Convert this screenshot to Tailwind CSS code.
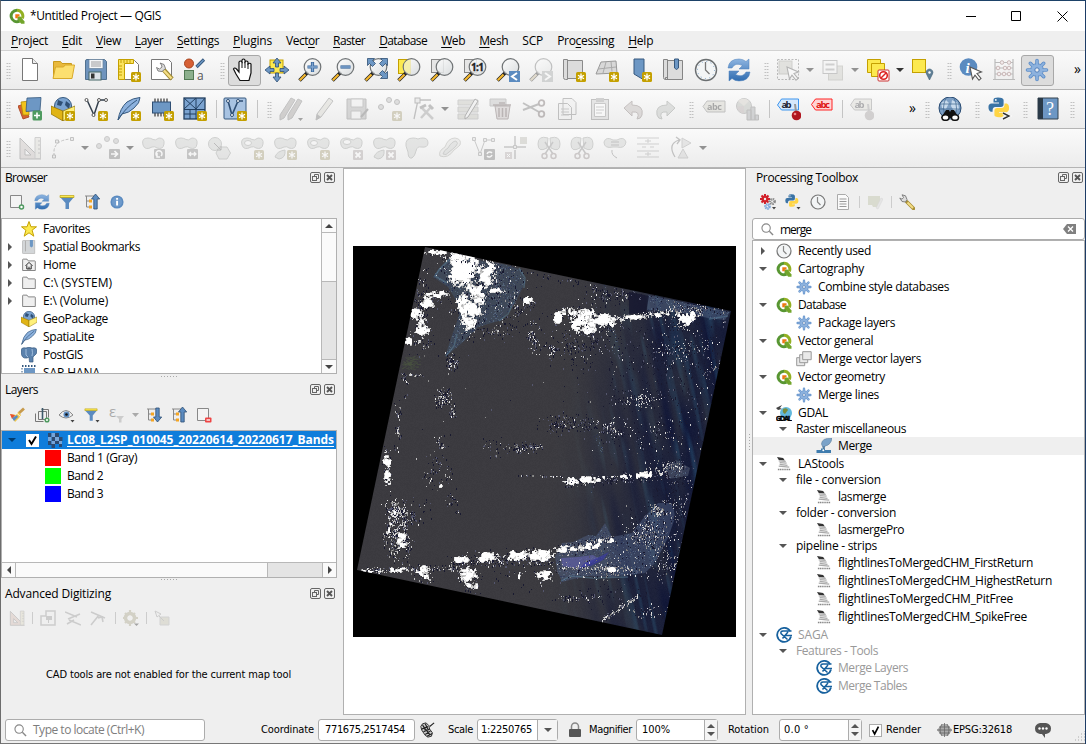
<!DOCTYPE html>
<html lang="en">
<head>
<meta charset="utf-8">
<title>*Untitled Project — QGIS</title>
<script src="https://cdn.jsdelivr.net/npm/@tailwindcss/browser@4"></script>
</head>
<body class="w-[1086px] h-[744px] overflow-hidden bg-[#efefef] font-['Open_Sans','Noto_Sans',sans-serif] text-[12px] leading-[18px] text-black">
<svg class="absolute size-0">
<defs>
<linearGradient id="glass" x1="0" y1="0" x2="1" y2="1"><stop offset="0" stop-color="#fff"/><stop offset="1" stop-color="#d5d9db"/></linearGradient>
<linearGradient id="ref" x1="0" y1="0" x2="0" y2="1"><stop offset="0" stop-color="#8db4e0"/><stop offset="1" stop-color="#2f6cb0"/></linearGradient>
<symbol id="nb" viewBox="0 0 24 24"><rect x="14" y="14" width="10" height="10" rx="1.500" fill="#c4a000"/><path d="M19 15.500v7M16 17.200l6 3.600M22 17.200l-6 3.600" stroke="#fff" stroke-width="1.300"/></symbol>
<symbol id="mag" viewBox="0 0 24 24"><path d="M10 14L1.500 22.500" stroke="#222" stroke-width="3.600"/><path d="M7.500 16.500L1.800 22.200" stroke="#f5b82e" stroke-width="2.200"/><circle cx="14.500" cy="9" r="8.300" fill="url(#glass)" fill-opacity=".85" stroke="#6f7375" stroke-width="1.200"/></symbol>
<symbol id="qlogo" viewBox="0 0 16 16"><path d="M8 2.200a5.800 5.800 0 1 0 2.500 11" fill="none" stroke="#589632" stroke-width="3"/><path d="M8 2.200a5.800 5.800 0 0 1 5.300 8.200" fill="none" stroke="#93b023" stroke-width="3"/><path d="M8.500 8.500l3 0 4 5v2.300h-3.300l-3.700-4.300z" fill="#72a52b"/><path d="M6.300 6.200h4.200v2l-1.700.2v1.800H6.300z" fill="#ee7913"/></symbol>
<symbol id="new" viewBox="0 0 24 24"><path d="M4.500.5h10l5 5v17h-15z" fill="#fff" stroke="#777"/><path d="M14.500.5v5h5" fill="#eee" stroke="#777"/></symbol>
<symbol id="open" viewBox="0 0 24 24"><path d="M2.500 20.500V3.500h7l1.500 2h9.500v3" fill="#e9b93c" stroke="#c99a1d"/><path d="M2 20.500L4.500 9h8l1.500-2h9.500L21 20.500z" fill="#fcdf6f" stroke="#d8a92a"/></symbol>
<symbol id="save" viewBox="0 0 24 24"><path d="M1.500 3q0-1.500 1.500-1.500h17.500L22.500 3.500v18h-21z" fill="#6f94bd" stroke="#52718f"/><rect x="5" y="1.500" width="14" height="9" fill="#f4f6f8" stroke="#66809b" stroke-width=".7"/><path d="M7 4h10M7 6h10M7 8h10" stroke="#888" stroke-width=".8"/><rect x="5" y="14" width="12" height="8" fill="#dde3ea" stroke="#466"/><rect x="7" y="15.500" width="3.500" height="5" fill="#333"/></symbol>
<symbol id="layout" viewBox="0 0 24 24"><path d="M5.500 2.500h12l4 4v15h-16z" fill="#fff" stroke="#777"/><path d="M1.500 1.500h15v4h-9v16h-6z" fill="#fbe35e" stroke="#c4a000"/><path d="M4 2v3M7 2v3M10 2v3M13 2v3M2 8h3M2 11h3M2 14h3M2 17h3" stroke="#c4a000"/><use href="#nb"/></symbol>
<symbol id="wrench" viewBox="0 0 24 24"><path d="M1.500 1.500h17l3 3v17h-20z" fill="#fff" stroke="#777"/><path d="M13 11l9 10" stroke="#a18b32" stroke-width="4.500"/><path d="M13.500 12l8 8.500" stroke="#f4dd85" stroke-width="2.500"/><path d="M10 5l4 1.500 1.500 4-3.500 3-4-.5L6.500 9.500l3 1.500 2.500-2-.5-2z" fill="#ddd" stroke="#777" stroke-width=".9"/></symbol>
<symbol id="style" viewBox="0 0 24 24"><circle cx="6" cy="5.500" r="4.500" fill="#d66035" stroke="#a8431e"/><rect x="1.500" y="12.500" width="9" height="9" fill="#8cb08d" stroke="#527a54"/><path d="M13.500 9l7.500-7.500" stroke="#36597e" stroke-width="3.200"/><path d="M14 8.500l6.500-6.500" stroke="#6d97c4" stroke-width="1.500"/><text x="14" y="22" font-size="12" fill="#555">a</text></symbol>
<symbol id="hand" viewBox="0 0 24 24"><path d="M8 22.500L4 16 1.500 11q1-2 3 0L7 14V4q1.500-2 3 0V2q1.500-2 3 0v2q1.500-2 3 0v2q2-1.500 3 0v9l-2 7.500z" fill="#fff" stroke="#111" stroke-width="1.200"/><path d="M10 4v6M13 4v6M16 5.500V11" stroke="#111"/></symbol>
<symbol id="pan" viewBox="0 0 24 24"><rect x="5" y="2" width="13" height="13" fill="#fce94f" stroke="#c4a000"/><path d="M12 0l4 5h-2.500v4h-3V5H8zM12 24l4-5h-2.500v-4h-3v4H8zM0 12l5-4v2.500h4v3H5V16zM24 12l-5-4v2.500h-4v3h4V16z" fill="#6d97c4" stroke="#2f4f74" stroke-width=".8"/></symbol>
<symbol id="zin" viewBox="0 0 24 24"><use href="#mag"/><path d="M14.500 4v10M9.500 9h10" stroke="#36659b" stroke-width="3.200"/><path d="M14.500 4.500v9M10 9h9" stroke="#7fa5cf" stroke-width="1.500"/></symbol>
<symbol id="zout" viewBox="0 0 24 24"><use href="#mag"/><path d="M9.500 9h10" stroke="#36659b" stroke-width="3.200"/><path d="M10 9h9" stroke="#7fa5cf" stroke-width="1.500"/></symbol>
<symbol id="zfull" viewBox="0 0 24 24"><use href="#mag"/><path d="M3.500.5h7l-2 2 3 3-3 3-3-3-2 2zM23.500.5h-7l2 2-3 3 3 3 3-3 2 2zM23.500 20.500h-7l2-2-3-3 3-3 3 3 2-2z" fill="#6d97c4" stroke="#2f4f74" stroke-width=".8"/></symbol>
<symbol id="zsel" viewBox="0 0 24 24"><rect x="1.500" y="1.500" width="12" height="14" fill="#fce94f" stroke="#c4a000"/><use href="#mag"/><path d="M7.500 5q2-3 6-3.500v14q-6-.5-6.500-6z" fill="#f6ee9a" opacity=".75"/></symbol>
<symbol id="zlay" viewBox="0 0 24 24"><rect x="1.500" y="1.500" width="12" height="13" fill="#e6e6e6" stroke="#888"/><use href="#mag"/></symbol>
<symbol id="z11" viewBox="0 0 24 24"><rect x="1.500" y="1.500" width="12" height="13" fill="#e6e6e6" stroke="#888"/><use href="#mag"/><text x="8" y="12.700" font-size="10" font-weight="bold" fill="#222" stroke="#222" stroke-width=".3" textLength="13">1:1</text></symbol>
<symbol id="zlast" viewBox="0 0 24 24"><use href="#mag"/><rect x="13" y="13" width="11" height="11" fill="#5b8bc0"/><path d="M21 15l-5 3.500 5 3.500" fill="none" stroke="#fff" stroke-width="2"/></symbol>
<symbol id="znext" viewBox="0 0 24 24"><use href="#mag"/><rect x="13" y="13" width="11" height="11" fill="#9aa"/><path d="M16 15l5 3.500-5 3.500" fill="none" stroke="#fff" stroke-width="2"/></symbol>
<symbol id="nmap" viewBox="0 0 24 24"><path d="M1.500 1.500h4v20h-2q-2 0-2-2zM5.500 2.500h15v18h-15z" fill="#dcdcdc" stroke="#8a8a8a"/><use href="#nb"/></symbol>
<symbol id="n3d" viewBox="0 0 24 24"><path d="M6 4l15-1 1 12-21 1z" fill="#d8d8d8" stroke="#999"/><path d="M3 11l18-2M11 4L8 15M16 3.500l1 10" stroke="#aaa"/><use href="#nb"/></symbol>
<symbol id="nbm" viewBox="0 0 24 24"><path d="M6 1h10v21l-5-3-5-3z" fill="#6d97c4" stroke="#36597e"/><use href="#nb"/></symbol>
<symbol id="bms" viewBox="0 0 24 24"><path d="M2.500 1.500h4v20h-2q-2 0-2-2zM6.500 2.500h15v19h-17v-2h2z" fill="#dcdcdc" stroke="#858585"/><path d="M13.500 1h4v9l-2 1.500-2-1.500z" fill="#6d97c4" stroke="#36597e"/></symbol>
<symbol id="clock" viewBox="0 0 24 24"><circle cx="12" cy="12" r="10.500" fill="#f3f5f6" stroke="#6b6f71" stroke-width="1.400"/><circle cx="12" cy="12" r="8.500" fill="none" stroke="#7aa0c8" stroke-dasharray="1 3.450"/><path d="M11.500 4v8l4 4" fill="none" stroke="#777" stroke-width="1.300"/></symbol>
<symbol id="refresh" viewBox="0 0 24 24"><path d="M1 10Q2 1 12 1q4 0 7 2.500L22 1v10H12l3.500-3.500Q8 4 5 10zM23 14q-1 9-11 9-4 0-7-2.500L2 23V13h10l-3.500 3.500Q16 20 19 14z" fill="url(#ref)" stroke="#4a7fba" stroke-width=".5"/></symbol>
<symbol id="cursor" viewBox="0 0 24 24"><path d="M11 9l11.500 5-4.500 1.500 4 5-2 1.800-4-5.200-2.500 4z" fill="#fff" stroke="#555" stroke-width="1.100"/></symbol>
<symbol id="sel" viewBox="0 0 24 24"><rect x="1.500" y="1.500" width="21" height="20" fill="none" stroke="#666" stroke-dasharray="2 1.500"/><rect x="3" y="3" width="13" height="13" fill="#c7c7a8" stroke="#98987c"/><use href="#cursor"/></symbol>
<symbol id="selv" viewBox="0 0 24 24"><rect x="7.500" y="8" width="14" height="14" fill="#cdcdaf" stroke="#a5a58c"/><rect x="2" y="2.500" width="14" height="13" fill="#f4f4f4" stroke="#888"/><path d="M4.500 6.500h9M4.500 11.500h9" stroke="#999" stroke-width="2"/></symbol>
<symbol id="desel" viewBox="0 0 24 24"><path d="M1.500 1.500h13v13h-13z" fill="#fce94f" stroke="#c4a000"/><path d="M5.500 5.500h13v13h-13z" fill="#fce94f" stroke="#c4a000"/><rect x="12" y="12" width="11" height="11" rx="1" fill="#fff" stroke="#c33"/><circle cx="17.500" cy="17.500" r="3.800" fill="none" stroke="#d22" stroke-width="1.600"/><path d="M15 20l5-5" stroke="#d22" stroke-width="1.500"/></symbol>
<symbol id="selloc" viewBox="0 0 24 24"><rect x="1.500" y="1.500" width="13" height="13" fill="#fce94f" stroke="#c4a000"/><path d="M18.500 22l-3-6a3.400 3.400 0 1 1 6 0z" fill="#5f7f96" stroke="#3f5f76" stroke-width=".6"/><circle cx="18.500" cy="14.500" r="1.200" fill="#fff"/></symbol>
<symbol id="ident" viewBox="0 0 24 24"><circle cx="9.500" cy="9" r="8.800" fill="#5b8bc0"/><text x="6.500" y="14.500" font-size="15" font-style="italic" font-weight="bold" font-family="Liberation Serif" fill="#fff">i</text><use href="#cursor"/></symbol>
<symbol id="abacus" viewBox="0 0 24 24"><path d="M3 1v20M21 1v20M3 4.500h18M3 10h18M3 16h18M1 21.500h22" stroke="#bbb" stroke-width="1.200"/><g fill="#f4eded" stroke="#c9b8b8"><circle cx="10" cy="4.500" r="1.800"/><circle cx="17" cy="4.500" r="1.800"/><circle cx="6" cy="10" r="1.800"/><circle cx="13" cy="10" r="1.800"/><circle cx="17" cy="10" r="1.800"/><circle cx="7" cy="16" r="1.800"/><circle cx="12" cy="16" r="1.800"/><circle cx="17" cy="16" r="1.800"/></g></symbol>
<symbol id="gear" viewBox="0 0 24 24"><g stroke="#5f8fc9" stroke-width="3.600" stroke-linecap="round"><path d="M12 2.500v19M2.500 12h19M5.300 5.300l13.400 13.400M18.700 5.300L5.300 18.700"/></g><circle cx="12" cy="12" r="6.300" fill="#8db2de" stroke="#5f8fc9"/><g stroke="#8db2de" stroke-width="1.800" stroke-linecap="round"><path d="M12 2.500v19M2.500 12h19M5.300 5.300l13.400 13.400M18.700 5.300L5.300 18.700"/></g><circle cx="12" cy="12" r="2.200" fill="#eee" stroke="#4d7dbb"/></symbol>
<symbol id="dsm" viewBox="0 0 24 24"><path d="M0 9l6-2 5 13-6 2z" fill="#d66035" stroke="#a33f1b" stroke-width=".8"/><path d="M3 5l8-1v14H5z" fill="#f2c31b" stroke="#b08c0a" stroke-width=".8"/><path d="M9 1l14-.5-1 13-14 1z" fill="#6d97c4" stroke="#36597e" stroke-width=".8"/><rect x="14.500" y="13.500" width="9.500" height="10" rx="1.500" fill="#4e9a5f"/><path d="M19 15.500v6M16 18.500h6" stroke="#fff" stroke-width="1.600"/></symbol>
<symbol id="gpkg" viewBox="0 0 24 24"><circle cx="12" cy="9" r="8.500" fill="#7ba3d0" stroke="#36597e"/><path d="M7 3l5 2-2 4-4-1zM15 4l4 3-1 5-4-4z" fill="#2f4f74"/><path d="M0 9l12 5v10L0 17z" fill="#e0b416" stroke="#8a6c00" stroke-width=".7"/><path d="M24 9l-12 5v10l12-7z" fill="#fff07a" stroke="#8a6c00" stroke-width=".7"/></symbol>
<symbol id="gpkgn" viewBox="0 0 24 24"><use href="#gpkg"/><use href="#nb"/></symbol>
<symbol id="shp" viewBox="0 0 24 24"><path d="M3 3l7 15L15 3h7" fill="none" stroke="#333f4c" stroke-width="1.500"/><g fill="#fff" stroke="#555"><circle cx="2.500" cy="3" r="1.500"/><circle cx="15" cy="3" r="1.500"/><circle cx="22" cy="3" r="1.500"/><circle cx="9.500" cy="18" r="1.500"/></g><use href="#nb"/></symbol>
<symbol id="feather" viewBox="0 0 24 24"><path d="M1 23Q3 11 10 5 16 1 23 .5 23 6 17 11 12 16 5 17z" fill="#8db2de" stroke="#36597e"/><path d="M1 23Q8 11 20 3" stroke="#36597e" fill="none"/></symbol>
<symbol id="slite" viewBox="0 0 24 24"><use href="#feather"/><use href="#nb"/></symbol>
<symbol id="chip" viewBox="0 0 24 24"><path d="M5 1.500v18M8 1.500v18M11 1.500v18M14 1.500v18M17 1.500v18" stroke="#333" stroke-width="1.200"/><rect x="2.500" y="5" width="18" height="11" fill="#6d97c4" stroke="#2f4f74"/><use href="#nb"/></symbol>
<symbol id="mesh" viewBox="0 0 24 24"><rect x="1" y="1" width="21" height="21" fill="#7ba3d0" stroke="#223f60" stroke-width="1.300"/><path d="M1 12.500h21M13 1v21M1 1l12 11M13 1L1 12M13 12L22 1M7 12v10M1 17h12" stroke="#223f60"/><use href="#nb"/></symbol>
<symbol id="virt" viewBox="0 0 24 24"><rect x="1" y="1" width="22" height="21" rx="1" fill="#a8c3e2" stroke="#36597e"/><path d="M5 4l4 14 6-14h5" fill="none" stroke="#2f4f74" stroke-width="1.600"/><g fill="#fff" stroke="#2f4f74"><circle cx="5" cy="4" r="1.500"/><circle cx="9" cy="18" r="1.500"/><circle cx="15" cy="4" r="1.500"/></g><use href="#nb"/></symbol>
<symbol id="pencil" viewBox="0 0 24 24"><path d="M5 17L17 1l4 3L9 20l-5 3z" fill="#d8d6b4" stroke="#777"/><path d="M4 23l1-6 4 3z" fill="#777"/></symbol>
<symbol id="pencils" viewBox="0 0 24 24"><path d="M1 18L12 1l4 2L5 21l-4 2zM9 18L19 2l4 2-10 17-4 2z" fill="#a89a90" stroke="#777"/><path d="M19 21h5l-2.500 3z" fill="#333"/></symbol>
<symbol id="savee" viewBox="0 0 24 24"><path d="M2 2h19v20H2z" fill="#aaa" stroke="#777"/><path d="M6 2h12v8H6zM6 14h10v8H6z" fill="#eee" stroke="#888"/><path d="M16 20l7-8" stroke="#666" stroke-width="2"/></symbol>
<symbol id="pts" viewBox="0 0 24 24"><g fill="#bbb" stroke="#777"><circle cx="3" cy="10" r="2.500"/><circle cx="11" cy="3" r="2.500"/><circle cx="19" cy="5" r="2.500"/></g><use href="#nb"/></symbol>
<symbol id="vert" viewBox="0 0 24 24"><path d="M3 22L7 3h13" fill="none" stroke="#777" stroke-width="1.300"/><rect x="4" y="1" width="5" height="5" fill="#ddd" stroke="#666"/><path d="M10 10l12 12M10 21l10-11" stroke="#999" stroke-width="2.500"/><path d="M9 11l6-3M18 8l4 4" stroke="#777" stroke-width="3"/></symbol>
<symbol id="attr" viewBox="0 0 24 24"><path d="M2 3h20v5H2zM2 10h20v5H2zM2 17h20v5H2z" fill="#c3c3a0" stroke="#999"/><path d="M9 19L19 2l3 2-10 16-3 2z" fill="#eee" stroke="#555"/></symbol>
<symbol id="trash" viewBox="0 0 24 24"><path d="M1 2h16v7H1z" fill="#bbb" stroke="#888"/><path d="M6 9h15l-2 13H8z" fill="#d5b5b5" stroke="#8b5252"/><path d="M4 8h18M10 6h6M10 11v9M13.500 11v9M17 11v9" stroke="#8b5252" stroke-width="1.500"/></symbol>
<symbol id="cut" viewBox="0 0 24 24"><path d="M1 6l16 9M1 13L17 7" stroke="#777" stroke-width="2"/><g fill="none" stroke="#8b6262" stroke-width="1.800"><circle cx="19.500" cy="6" r="2.800"/><circle cx="19.500" cy="17" r="2.800"/></g></symbol>
<symbol id="copy" viewBox="0 0 24 24"><path d="M8 1.500h9l4 4v12H8zM3.500 6.500h9l4 4v12h-13z" fill="#eee" stroke="#777"/><path d="M6 12h8M6 15h8M6 18h8" stroke="#888"/></symbol>
<symbol id="paste" viewBox="0 0 24 24"><rect x="3.500" y="2.500" width="17" height="20" fill="#ccc" stroke="#777"/><path d="M6.500 6.500h11v13h-11z" fill="#fff" stroke="#888"/><rect x="8" y="1" width="8" height="4" fill="#999"/><path d="M8 10h8M8 13h8M8 16h6" stroke="#999"/></symbol>
<symbol id="undo" viewBox="0 0 24 24"><path d="M3 11l8-7v4q12 0 10 10-1 4-5 4 4-8-5-7v4z" fill="#cfb0a8" stroke="#967068"/></symbol>
<symbol id="redo" viewBox="0 0 24 24"><path d="M21 11l-8-7v4Q1 8 3 18q1 4 5 4-4-8 5-7v4z" fill="#b5c0b5" stroke="#7f8f7f"/></symbol>
<symbol id="abcg" viewBox="0 0 24 24"><path d="M1 9.500l4-5.500h18v11H5z" fill="#d5d1a8" stroke="#777"/><text x="5" y="12.500" font-size="9" font-weight="bold" fill="#333" textLength="15">abc</text></symbol>
<symbol id="pie" viewBox="0 0 24 24"><circle cx="9" cy="9" r="7.500" fill="#a8b8a0" stroke="#888"/><path d="M9 9L3 4a8 8 0 0 1 11 0z" fill="#d9c8a5"/><path d="M9 9v7.500a8 8 0 0 1-7-7z" fill="#c9a0a0"/><path d="M12 13h4v10h-4zM16 10h4v13h-4zM20 18h3.500v5H20z" fill="#9aa7b0" stroke="#777"/></symbol>
<symbol id="abpin" viewBox="0 0 24 24"><path d="M.5 8l4-6h17v11h-17z" fill="#d6e8fc" stroke="#3d95ee"/><text x="4.500" y="11" font-size="9.500" font-weight="bold" fill="#223" textLength="10">ab</text><path d="M18 7l1 8" stroke="#999" stroke-width="2"/><circle cx="19.500" cy="18.500" r="4.800" fill="#b01620"/><circle cx="18" cy="17" r="1.300" fill="#e88"/></symbol>
<symbol id="abping" viewBox="0 0 24 24"><path d="M.5 8l4-6h17v11h-17z" fill="#dddabc" stroke="#888"/><text x="4.500" y="11" font-size="9.500" font-weight="bold" fill="#445" textLength="10">ab</text><path d="M18 7l1 8" stroke="#999" stroke-width="2"/><circle cx="19.500" cy="18.500" r="4.800" fill="#b09a9c"/></symbol>
<symbol id="abcr" viewBox="0 0 24 24"><path d="M1.500 7.500l4-5.500h16.500v11H5.500z" fill="#ffd5d5" stroke="#f22"/><text x="6" y="11" font-size="9.500" font-weight="bold" fill="#d11" textLength="14">abc</text></symbol>
<symbol id="globe" viewBox="0 0 24 24"><circle cx="12" cy="11" r="11" fill="#7d9fc4" stroke="#294b72"/><path d="M3 6l5-3 3 3-3 6-4-1zM14 3l6 3 1 6-5 2-3-5z" fill="#c8daec"/><path d="M2 7h20M1 12h22M8 1Q3 11 8 21M16 1q5 10 0 20" fill="none" stroke="#3e648e" stroke-width=".7"/><path d="M3 21l5-8h3l1 2 1-2h3l5 8z" fill="#111"/><ellipse cx="7.500" cy="20.500" rx="3.500" ry="2.800" fill="#fff" stroke="#111" stroke-width="1.500"/><ellipse cx="17" cy="20.500" rx="3.500" ry="2.800" fill="#fff" stroke="#111" stroke-width="1.500"/></symbol>
<symbol id="py" viewBox="0 0 24 24"><path d="M6 6V3q0-2.500 5-2.500T17 3v5q0 3-3 3H8q-3 0-3 4v1H3q-2.500-1-2.500-5T4 7h8V6z" fill="#3a73a5"/><path d="M18 7h2.500q2.500 1 2.500 5t-3 4.500H12v1h5v2q0 2.500-5 2.500T7 20v-5q0-3 3-3h5q3 0 3-4z" fill="#ffd545"/><circle cx="8.500" cy="3.200" r="1" fill="#fff"/></symbol>
<symbol id="pyc" viewBox="0 0 24 24"><use href="#py" width="22" height="22"/><path d="M15 16l6 3-6 3" fill="none" stroke="#fff" stroke-width="3"/><path d="M15 16l6 3-6 3" fill="none" stroke="#333" stroke-width="1.400"/></symbol>
<symbol id="help" viewBox="0 0 24 24"><path d="M2 1h20v21H2z" fill="#6d97c4" stroke="#35434f"/><path d="M2 1h5v21H2z" fill="#2a3a48"/><text x="10" y="18" font-size="18" font-family="Liberation Serif" fill="#fff">?</text></symbol>
<symbol id="tri" viewBox="0 0 24 24"><path d="M2 2v21h21zM7 13v6h6z" fill="#d5bcb2" fill-rule="evenodd" stroke="#777"/><path d="M17 1.500h5.500v21H17z" fill="#ddd8c0" stroke="#999"/><path d="M20 5h2M20 9h2M20 13h2M20 17h2" stroke="#888"/></symbol>
<symbol id="arc" viewBox="0 0 24 24"><path d="M3 20V15Q4 4 20 3" fill="none" stroke="#777" stroke-dasharray="3 1.500"/><path d="M1.500 19h3v3h-3zM4.500 4h3v3h-3zM19.500 1.500h3v3h-3z" fill="#ddd" stroke="#777"/></symbol>
<symbol id="mvp" viewBox="0 0 24 24"><g fill="#bbb" stroke="#888"><circle cx="3" cy="10" r="2.500"/><circle cx="11" cy="3" r="2.500"/><circle cx="20" cy="5" r="2.500"/></g><rect x="13" y="13" width="11" height="10" rx="1" fill="#777"/><path d="M15 18h6M18.500 15l3 3-3 3" stroke="#fff" stroke-width="1.700" fill="none"/></symbol>
<symbol id="bl" viewBox="0 0 24 24"><path d="M2 9q-2-7 5-7 3 0 5 1.500T18 2q6 0 5 6t-7 4q-2-2-5-1-7 4-9-2z" fill="#c6cdc6" stroke="#929a92"/></symbol>
<symbol id="b1" viewBox="0 0 24 24"><use href="#bl"/><rect x="13" y="13" width="11" height="10" rx="1" fill="#858585"/><path d="M16 20a3 3 0 1 1 4 0M16 17v4h3" stroke="#fff" stroke-width="1.500" fill="none"/></symbol>
<symbol id="b2" viewBox="0 0 24 24"><use href="#bl"/><rect x="13" y="13" width="11" height="10" rx="1" fill="#858585"/><path d="M15 18h7M17 16l-2 2 2 2M20 16l2 2-2 2" stroke="#fff" stroke-width="1.300" fill="none"/></symbol>
<symbol id="b3" viewBox="0 0 24 24"><circle cx="8" cy="8" r="6.500" fill="#c6cdc6" stroke="#929a92"/><path d="M12 11h8l3.500 6-3.500 6h-8l-3-6z" fill="#ced3ce" stroke="#929a92"/><path d="M7 7l7 7M14 10v4h-4" stroke="#666" fill="none"/></symbol>
<symbol id="b4" viewBox="0 0 24 24"><use href="#bl"/><ellipse cx="8" cy="7" rx="3.500" ry="2.500" fill="#f3f3f3" stroke="#929a92"/><use href="#nb"/></symbol>
<symbol id="b5" viewBox="0 0 24 24"><use href="#bl"/><path d="M2 21q2-6 10-7 1 8-6 9z" fill="#c6cdc6" stroke="#929a92"/><use href="#nb"/></symbol>
<symbol id="xb" viewBox="0 0 24 24"><rect x="14" y="14" width="10" height="10" rx="1" fill="#b99c9c"/><path d="M16.500 16.500l5 5M21.500 16.500l-5 5" stroke="#fff" stroke-width="1.800"/></symbol>
<symbol id="b6" viewBox="0 0 24 24"><use href="#bl"/><ellipse cx="8" cy="6" rx="4" ry="2.500" fill="#f3f3f3" stroke="#929a92"/><use href="#xb"/></symbol>
<symbol id="b7" viewBox="0 0 24 24"><use href="#bl"/><path d="M2 21q2-6 10-7 1 8-6 9z" fill="#c6cdc6" stroke="#929a92"/><use href="#xb"/></symbol>
<symbol id="b8" viewBox="0 0 24 24"><path d="M1 10Q0 2 8 2q3 0 5 1 2-1 5-1 5 0 5 5t-7 4q-4-1-5 4t-4 7q-4 1-4-6z" fill="#c6cdc6" stroke="#929a92"/></symbol>
<symbol id="b9" viewBox="0 0 24 24"><path d="M2 20q-2-5 5-9 3-9 10-9 7 1 5 7-3 3-6 5-6 9-14 6z" fill="#ddddd5" stroke="#a5a58f"/><path d="M5 18q1-4 5-6 4-7 8-7 3 2 0 5-4 4-7 6-3 4-6 2z" fill="#c6cdc6" stroke="#929a92"/></symbol>
<symbol id="b10" viewBox="0 0 24 24"><path d="M3 3l6 15 5-14h8" fill="none" stroke="#888"/><path d="M1.500 1.500h3v3h-3zM12.500 2.500h3v3h-3zM20.500 2.500h3v3h-3zM7.500 16.500h3v3h-3z" fill="#ddd" stroke="#888"/><rect x="13" y="13" width="11" height="11" rx="1" fill="#777"/><path d="M16 18a3 3 0 0 1 5-1M21 19a3 3 0 0 1-5 1" stroke="#fff" stroke-width="1.500" fill="none"/></symbol>
<symbol id="b11" viewBox="0 0 24 24"><path d="M11 0v9M11 14v9M0 11h8M14 11h8M7.500 11h7" stroke="#888" stroke-width="1.500"/><path d="M9.500 9.500h3v3h-3z" fill="#ddd" stroke="#888"/><rect x="16" y="1" width="7" height="7" fill="#bbb89a"/><rect x="1" y="16" width="7" height="7" fill="#c9a9a9"/><path d="M3 18l3 3M6 18l-3 3" stroke="#fff"/></symbol>
<symbol id="b12" viewBox="0 0 24 24"><path d="M11 2q-10-3-10 6t9 4zM13 2q10-3 10 6t-9 4z" fill="#c6cdc6" stroke="#929a92"/><path d="M8 6l8 12M16 6L8 18" stroke="#888" stroke-width="1.500"/><g fill="none" stroke="#a88" stroke-width="1.500"><circle cx="7.500" cy="20" r="2.500"/><circle cx="16.500" cy="20" r="2.500"/></g></symbol>
<symbol id="b14" viewBox="0 0 24 24"><path d="M10 4Q3 0 1 6q0 7 9 5h4q8 2 9-5-2-6-9-2z" fill="#c6cdc6" stroke="#929a92"/><path d="M8 6h8M8 9h8M9 14q-1 5 5 8" fill="none" stroke="#777"/></symbol>
<symbol id="b15" viewBox="0 0 24 24"><path d="M1 2h22M1 8h22M1 15h22M1 21h22M12 3v4M12 16v4M9 5h6M9 18h6M6 11h4M14 11h4" stroke="#999"/></symbol>
<symbol id="b16" viewBox="0 0 24 24"><path d="M13 2l9 5-9 5zM9 22l5-9 5 9z" fill="#ccc" stroke="#999"/><path d="M6 21Q-2 8 10 4M7 1l4 3-3 4" fill="none" stroke="#777" stroke-width="1.300"/></symbol>
<!-- 16px panel icons -->
<symbol id="addl" viewBox="0 0 16 16"><path d="M1.500 1.500h11v12h-11z" fill="#f4f4f4" stroke="#888"/><circle cx="12.500" cy="13" r="2" fill="#fff" stroke="#4e9a5f" stroke-width="1.500"/></symbol>
<symbol id="funnel" viewBox="0 0 16 16"><path d="M1 3h14l-5 6v6H6.500V9z" fill="#5b8bc0"/><path d="M1 1.500h14v2H1z" fill="#fce94f" stroke="#b69b00" stroke-width=".6"/></symbol>
<symbol id="coll" viewBox="0 0 16 16"><path d="M1 2h9M2.500 2v11H6M2.500 7H6" fill="none" stroke="#888"/><path d="M5 5.500h3v3H5zM5 11.500h3v3H5z" fill="#f5a623"/><path d="M11.500 0l4.200 5h-2.500v10h-3.400V5H7.500z" fill="#5b8bc0" stroke="#2f4f74" stroke-width=".8"/></symbol>
<symbol id="exp" viewBox="0 0 16 16"><path d="M1 2h9M2.500 2v11H6M2.500 7H6" fill="none" stroke="#888"/><path d="M5 5.500h3v3H5zM5 11.500h3v3H5z" fill="#f5a623"/><path d="M11.500 15l4.200-5h-2.500V1H9.800v9H7.500z" fill="#5b8bc0" stroke="#2f4f74" stroke-width=".8"/></symbol>
<symbol id="info" viewBox="0 0 16 16"><circle cx="8" cy="8" r="7.500" fill="#5b8bc0"/><circle cx="8" cy="8" r="5.800" fill="#6e9acb"/><path d="M7 6.500h2.200V12H7zM7 3.500h2.200v2H7z" fill="#fff"/></symbol>
<symbol id="star" viewBox="0 0 16 16"><path d="M8 .5l2 5.300h5.500l-4.400 3.400 1.700 6L8 11.800 3.200 15.200l1.700-6L.5 5.800H6z" fill="#fce94f" stroke="#c4a000"/></symbol>
<symbol id="bm16" viewBox="0 0 16 16"><path d="M.5 1.500q0-1 1-1h13v15h-13q-1 0-1-1z" fill="#d3d6d8" stroke="#aaa" stroke-width=".7"/><path d="M4 1v12" stroke="#aaa"/><path d="M9 0h3.500v7l-1.700 1.500L9 7z" fill="#6d97c4"/></symbol>
<symbol id="fold" viewBox="0 0 16 16"><path d="M.7 14.300V2q0-.7.7-.7h4.300l1.500 2h7.300q.7 0 .7.700v10.300z" fill="#efefef" stroke="#777"/></symbol>
<symbol id="home" viewBox="0 0 16 16"><use href="#fold"/><path d="M4 9l4-4 4 4M5.500 8.500v4h5v-4M8 12.500V10" fill="none" stroke="#222" stroke-width="1.100"/></symbol>
<symbol id="eleph" viewBox="0 0 16 16"><path d="M0 4Q0 0 5 1q3-1.500 6 0 5-1 5 3 0 3-3 5l-1 1v5H8.500l-.5-5-2 1Q0 12 0 4z" fill="#5b82ad" stroke="#36597e" stroke-width=".7"/><path d="M5 2v6l2 2M11 2q1 4 0 7" fill="none" stroke="#a9c4e2" stroke-width=".9"/></symbol>
<symbol id="hana" viewBox="0 0 16 16"><path d="M1 1h14" stroke="#36597e" stroke-width="2" stroke-dasharray="1.500 1.500"/><path d="M1 3v12" stroke="#36597e" stroke-dasharray="1.500 1.500"/><rect x="3" y="3" width="11" height="12" fill="#6d97c4"/></symbol>
<symbol id="brush" viewBox="0 0 16 16"><path d="M9.500 6.500l5.500-5" stroke="#c79a4b" stroke-width="2.800"/><path d="M1 7l6 1 2.500-3 2.500 3-2 3-4 4z" fill="#f0c648"/><path d="M1 7l5 1-3 4z" fill="#e8502f"/><path d="M3 11l5-3 1 2-4 4z" fill="#5b8bc0"/><path d="M7.500 6l4 3.500" stroke="#fff" stroke-width=".8"/></symbol>
<symbol id="addg" viewBox="0 0 16 16"><path d="M1.500 6.500v8h8M4.500 4.500v8h8v-8zM7.500 2.500h7v8" fill="none" stroke="#777"/><path d="M8.500 12V1" stroke="#3c5a6b" stroke-width="1.600"/><circle cx="13" cy="13" r="1.800" fill="#fff" stroke="#4e9a5f" stroke-width="1.500"/></symbol>
<symbol id="eye" viewBox="0 0 16 16"><path d="M0 8q7-9 14 0-7 6-14 0z" fill="#eee" stroke="#888"/><circle cx="7.500" cy="7.500" r="3" fill="#5b8bc0"/><circle cx="7.500" cy="7.500" r="1.300" fill="#111"/><path d="M11.500 13h4l-2 2.500z" fill="#444"/></symbol>
<symbol id="funnela" viewBox="0 0 16 16"><use href="#funnel" width="14" height="15"/><path d="M11.500 13h4l-2 2.500z" fill="#444"/></symbol>
<symbol id="eps" viewBox="0 0 16 16"><text x="0" y="10" font-size="15" fill="#aaa">ε</text><path d="M7 9h8l-2.500 3v3.500H10V12z" fill="#ccc"/></symbol>
<symbol id="rem" viewBox="0 0 16 16"><path d="M1.500 1.500h11v12h-11z" fill="#f4f4f4" stroke="#888"/><rect x="9" y="10.500" width="6.500" height="5" rx="1" fill="#e44"/><path d="M10.500 13h3.500" stroke="#fff" stroke-width="1.300"/></symbol>
<symbol id="rast" viewBox="0 0 16 16"><path d="M1 1h3.500v4H1zM8 1h4v4H8zM4.500 5H8v4H4.500zM12 5h3.500v4H12zM1 9h3.500v4H1zM8 9h4v3H8zM4.500 12H8v4H4.500zM12 12h3v3h-3z" fill="#2c4a70"/><path d="M4.500 1H8v4H4.500zM8 5h4v4H8zM1 5h3.500v4H1zM4.500 9H8v3H4.500zM12 9h3v3h-3z" fill="#77a5d8"/></symbol>
<symbol id="a1" viewBox="0 0 16 16"><path d="M6 1h9v14H1V6h5z" fill="none" stroke="#999" stroke-width="1.500"/><path d="M6 6h6v4H9v3H8v-3H6z" fill="#999"/></symbol>
<symbol id="a2" viewBox="0 0 16 16"><path d="M0 2l12 5M4 10l12 5M3 9l12-5M2 14l7-4" stroke="#999" stroke-width="1.600"/></symbol>
<symbol id="a3" viewBox="0 0 16 16"><path d="M1 2l14 6M1 15L9 5M8 8l4-1 1 5" fill="none" stroke="#999" stroke-width="1.600"/></symbol>
<symbol id="a4" viewBox="0 0 16 16"><circle cx="7" cy="8" r="4.500" fill="none" stroke="#aaa58a" stroke-width="3.500"/><path d="M7 0v5M7 11v5M0 8h4M10 8h5M2 3l3 3M9 10l3 3M12 3L9 6M5 10l-3 3" stroke="#aaa58a" stroke-width="2.200"/><path d="M11 13.500h5L13.500 16z" fill="#333"/></symbol>
<symbol id="a5" viewBox="0 0 16 16"><path d="M1 1l6 3-4 3z" fill="#eee" stroke="#999"/><path d="M6 7h9v8H6z" fill="#c5c3b0" stroke="#aaa"/><path d="M5 6l5 5" stroke="#999"/></symbol>
<symbol id="rgear" viewBox="0 0 16 16"><path d="M5 0v10M0 5h10M1.500 1.500l7 7M8.500 1.500l-7 7" stroke="#d2202a" stroke-width="2"/><circle cx="5" cy="5" r="2.500" fill="none" stroke="#d2202a" stroke-width="2"/><circle cx="5" cy="5" r="1.200" fill="#efefef"/><circle cx="12.300" cy="7.500" r="2.300" fill="none" stroke="#888" stroke-width="2.600" stroke-dasharray="1.300 .7"/><circle cx="7.500" cy="12.500" r="2" fill="none" stroke="#7fa8dc" stroke-width="2.600" stroke-dasharray="1.300 .5"/><path d="M12 13h4l-2 2.500z" fill="#444"/></symbol>
<symbol id="py16" viewBox="0 0 16 16"><use href="#py" width="14" height="14"/><path d="M11.500 13h4l-2 2.500z" fill="#444"/></symbol>
<symbol id="clock16" viewBox="0 0 16 16"><circle cx="8" cy="8" r="7" fill="#f3f5f6" stroke="#777" stroke-width="1.200"/><path d="M7.500 3v5l3 3" fill="none" stroke="#888" stroke-width="1.200"/></symbol>
<symbol id="doc" viewBox="0 0 16 16"><path d="M2.500.5h8l3 3v12h-11z" fill="#fafafa" stroke="#aaa"/><path d="M4.500 5h7M4.500 7.500h7M4.500 10h7M4.500 12.500h7" stroke="#999"/></symbol>
<symbol id="editm" viewBox="0 0 16 16"><path d="M1 2h12v8l-3 3H6l-1-2H1z" fill="#c5c9b0"/><path d="M9 14l5-10 2 1-5 10z" fill="#ddd" stroke="#bbb" stroke-width=".5"/></symbol>
<symbol id="wr16" viewBox="0 0 16 16"><path d="M8 8l6.500 6.500" stroke="#a88f36" stroke-width="3.600" stroke-linecap="round"/><path d="M8.500 8.500l5.500 5.500" stroke="#f3dc84" stroke-width="2"/><path d="M3 .8l3.500 1L8 5.500 6.500 8 3 7.500.8 4l2.200 1.200L4.500 3.500z" fill="#ddd" stroke="#777" stroke-width=".9"/></symbol>
<symbol id="mvl" viewBox="0 0 16 16"><path d="M.7 6.700h8v8h-8z" fill="#e9e9e9" stroke="#999"/><path d="M3.700 3.700h8v8h-8z" fill="#e9e9e9" stroke="#999"/><path d="M6.700.7h8.500v8H6.700z" fill="#e9e9e9" stroke="#999"/></symbol>
<symbol id="gdal" viewBox="0 0 16 16"><circle cx="10" cy="8" r="6" fill="#62b8dc"/><path d="M7 4q4-2 5 1l-3 4q-3-1-2-5z" fill="#7a8c3c"/><path d="M0 3l6-3-2 3 2 1-4 1z" fill="#444"/><text x="-.3" y="15.700" font-size="7.500" font-weight="bold" textLength="16.300" stroke="#000" stroke-width=".4">GDAL</text></symbol>
<symbol id="gm" viewBox="0 0 16 16"><path d="M5.500 6q0-6 10.500-6-1 7-7 8l-1.500 3z" fill="#7ba3c9" stroke="#5a7c9b" stroke-width=".6"/><path d="M.5 12H5v-1.500h4V12h6v3H.5z" fill="#3f7cae"/><path d="M8 8v4" stroke="#3f6c94"/><circle cx="7.300" cy="12.300" r="1" fill="#fff"/></symbol>
<symbol id="las" viewBox="0 0 16 16"><path d="M0 0l7 1 2 3-7-.5z" fill="#333"/><path d="M2 4.500l8 .5M3 6.500l8 .5M3 8.500l9 1M2 10.500l12 1" stroke="#aaa" stroke-width="1.300"/><path d="M1 14.300h14" stroke="#888" stroke-width="1.800" stroke-dasharray="1.500 .6"/></symbol>
<symbol id="saga" viewBox="0 0 16 16"><path d="M14 4a7 7 0 1 0 1 5.500" fill="none" stroke="#17619e" stroke-width="1.800"/><path d="M15.500 4H7Q4.300 4.300 5 6.500L11.500 12.500M12 5L6.500 11.500M8.500 8.500H16" fill="none" stroke="#17619e" stroke-width="1.500"/></symbol>
<symbol id="float" viewBox="0 0 11 11"><rect x=".5" y=".5" width="10" height="10" rx="1.500" fill="none" stroke="#666"/><rect x="2.500" y="4.500" width="4" height="4" fill="none" stroke="#666"/><path d="M4.500 4V2.500h4v4H7" fill="none" stroke="#666"/></symbol>
<symbol id="close" viewBox="0 0 11 11"><rect x=".5" y=".5" width="10" height="10" rx="1.500" fill="none" stroke="#666"/><path d="M3 3l5 5M8 3L3 8" stroke="#555" stroke-width="1.900"/></symbol>
<symbol id="search" viewBox="0 0 14 14"><circle cx="5.500" cy="5.500" r="4.500" fill="none" stroke="#888" stroke-width="1.200"/><path d="M9 9l4 4" stroke="#888" stroke-width="1.500"/></symbol>
</defs></svg>

<div class="flex h-full flex-col border-x border-t border-t-[#1d4268] border-l-[#6d6d6d] border-r-[#1d3c66]">
  <header class="flex h-[30px] shrink-0 items-center bg-white pl-2">
    <svg class="size-4"><use href="#qlogo"/></svg>
    <span class="ml-[5px]" data-w="131">*Untitled Project — QGIS</span>
    <svg class="ml-auto mr-[17px] h-[11px] w-[102px]" viewBox="0 0 102 11"><path d="M0 5.500h10M45.500.5h9v9h-9zM91.500.5l10 10M101.500.5l-10 10" fill="none" stroke="#000"/></svg>
  </header>
  <nav id="menu" class="flex h-5 shrink-0 items-center gap-[14px] border-b border-[#d2d2d2] pl-[10px] underline-offset-2"></nav>
  <div id="bars" class="shrink-0"></div>

  <main class="flex h-[547px] shrink-0">
    <aside class="flex w-[336px] shrink-0 flex-col">
      <section class="flex h-[207px] shrink-0 flex-col">
        <div class="flex h-[19px] items-center pl-1 pr-[2px]"><span data-w="42">Browser</span><svg class="ml-auto size-[11px]"><use href="#float"/></svg><svg class="ml-[3px] size-[11px]"><use href="#close"/></svg></div>
        <div class="flex h-[31px] items-center gap-[9px] pb-[2px] pl-2">
          <svg class="size-4"><use href="#addl"/></svg><svg class="size-4"><use href="#refresh"/></svg><svg class="size-4"><use href="#funnel"/></svg><svg class="size-4"><use href="#coll"/></svg><svg class="ml-px size-[14px]"><use href="#info"/></svg>
        </div>
        <div class="flex h-[156px] border border-[#b0b0b0] bg-white">
          <div id="browser" class="flex-1 overflow-hidden pt-px"></div>
          <div class="flex w-[15px] flex-col border-l border-[#b8b8b8] bg-[#e4e4e4]">
            <div class="flex h-[14px] items-center justify-center border-b border-[#b8b8b8] bg-[#fafafa]"><svg class="h-[4px] w-2"><path d="M0 4h8L4 0z" fill="#444"/></svg></div>
            <div class="h-[49px] border-b border-[#b8b8b8] bg-[#fafafa]"></div>
            <div class="mt-auto flex h-[14px] items-center justify-center border-t border-[#b8b8b8] bg-[#fafafa]"><svg class="h-[4px] w-2"><path d="M0 0h8L4 4z" fill="#444"/></svg></div>
          </div>
        </div>
      </section>
      <div class="mx-auto mt-px h-px w-[17px] bg-[repeating-linear-gradient(90deg,#aaa_0_1px,transparent_1px_3px)]"></div>
      <section class="mt-[3px] flex h-[198px] shrink-0 flex-col">
        <div class="flex h-[19px] shrink-0 items-center pl-1 pr-[2px]"><span data-w="33">Layers</span><svg class="ml-auto size-[11px]"><use href="#float"/></svg><svg class="ml-[3px] size-[11px]"><use href="#close"/></svg></div>
        <div class="flex h-[31px] shrink-0 items-center gap-[9px] pl-2">
          <svg class="size-4"><use href="#brush"/></svg><svg class="size-4"><use href="#addg"/></svg><svg class="size-4"><use href="#eye"/></svg><svg class="size-4"><use href="#funnela"/></svg><svg class="size-4"><use href="#eps"/></svg><svg class="-ml-[2px] -mr-1 h-1 w-[7px]"><path d="M0 0h7L3.500 4z" fill="#aaa"/></svg><svg class="ml-[2px] size-4"><use href="#exp"/></svg><svg class="size-4"><use href="#coll"/></svg><svg class="size-4"><use href="#rem"/></svg>
        </div>
        <div class="flex h-[148px] flex-col border border-[#b0b0b0] bg-white">
          <div class="flex h-[18px] shrink-0 items-center overflow-hidden bg-[#0f7ddb] pl-[6px]">
            <svg class="h-1 w-2"><path d="M0 0h8L4 4z" fill="#003c70"/></svg>
            <svg class="ml-[10px] size-[13px] bg-white" viewBox="0 0 13 13"><path d="M3 6l2.500 4L10 2.500" fill="none" stroke="#000" stroke-width="1.900"/></svg>
            <svg class="ml-2 size-4"><use href="#rast"/></svg>
            <span class="ml-1 whitespace-nowrap font-bold text-white underline underline-offset-2" data-font='bold 12px "Open Sans"' data-w="267">LC08_L2SP_010045_20220614_20220617_Bands</span>
          </div>
          <div class="flex h-[18px] items-center pl-[43px]"><i class="size-4 bg-[#f00]"></i><span class="ml-[6px]" data-w="70">Band 1 (Gray)</span></div>
          <div class="flex h-[18px] items-center pl-[43px]"><i class="size-4 bg-[#0f0]"></i><span class="ml-[6px]" data-w="36">Band 2</span></div>
          <div class="flex h-[18px] items-center pl-[43px]"><i class="size-4 bg-[#00f]"></i><span class="ml-[6px]" data-w="36">Band 3</span></div>
          <div class="mt-auto flex h-[15px] border-t border-[#b8b8b8] bg-[#e4e4e4]">
            <div class="flex w-[14px] items-center justify-center border-r border-[#b8b8b8] bg-[#fafafa]"><svg class="h-2 w-1"><path d="M4 0v8L0 4z" fill="#444"/></svg></div>
            <div class="w-[252px] border-r border-[#b8b8b8] bg-[#fafafa]"></div>
            <div class="ml-auto flex w-[14px] items-center justify-center border-l border-[#b8b8b8] bg-[#fafafa]"><svg class="h-2 w-1"><path d="M0 0v8l4-4z" fill="#444"/></svg></div>
          </div>
        </div>
      </section>
      <div class="mx-auto mt-px h-px w-[17px] bg-[repeating-linear-gradient(90deg,#aaa_0_1px,transparent_1px_3px)]"></div>
      <section class="mt-1 flex flex-1 flex-col">
        <div class="flex h-[19px] items-center pl-1 pr-[2px]"><span data-w="106">Advanced Digitizing</span><svg class="ml-auto size-[11px]"><use href="#float"/></svg><svg class="ml-[3px] size-[11px]"><use href="#close"/></svg></div>
        <div class="flex h-[31px] items-center gap-[9px] pb-[2px] pl-2 opacity-40">
          <svg class="size-4"><use href="#tri"/></svg><i class="-ml-[2px] h-3 w-px bg-[#999]"></i><svg class="-ml-[2px] size-4"><use href="#a1"/></svg><svg class="size-4"><use href="#a2"/></svg><svg class="size-4"><use href="#a3"/></svg><i class="h-3 w-px bg-[#999]"></i><svg class="-ml-[2px] size-4"><use href="#a4"/></svg><i class="-ml-[2px] h-3 w-px bg-[#999]"></i><svg class="-ml-[2px] size-4"><use href="#a5"/></svg>
        </div>
        <p data-font='11px "DejaVu Sans Condensed"' class="mt-[32px] pl-[45px] font-['DejaVu_Sans_Condensed','DejaVu_Sans',sans-serif] text-[11px] leading-[18px]"><span data-w="245">CAD tools are not enabled for the current map tool</span></p>
      </section>
    </aside>
    <div class="flex w-[6px] shrink-0 items-center justify-center"></div>
    <section class="w-[403px] shrink-0 border border-[#b0b0b0] bg-white pl-[9px] pt-[77px]">
      <canvas id="map" width="383" height="391" class="block h-[391px] w-[383px] bg-black"></canvas>
    </section>
    <div class="flex w-[6px] shrink-0 items-center justify-center"><i class="h-4 w-px bg-[repeating-linear-gradient(180deg,#aaa_0_1px,transparent_1px_3px)]"></i></div>
    <aside class="flex w-[333px] shrink-0 flex-col">
      <div class="flex h-[19px] items-center pl-1 pr-[2px]"><span data-w="102">Processing Toolbox</span><svg class="ml-auto size-[11px]"><use href="#float"/></svg><svg class="ml-[3px] size-[11px]"><use href="#close"/></svg></div>
      <div class="flex h-[31px] items-center gap-[9px] pb-[2px] pl-2">
        <svg class="size-4"><use href="#rgear"/></svg><svg class="size-4"><use href="#py16"/></svg><svg class="size-4"><use href="#clock16"/></svg><svg class="size-4"><use href="#doc"/></svg><i class="-ml-px -mr-[2px] h-3 w-px bg-[#ccc]"></i><svg class="size-4 opacity-50"><use href="#editm"/></svg><i class="-ml-px -mr-[2px] h-3 w-px bg-[#ccc]"></i><svg class="size-4"><use href="#wr16"/></svg>
      </div>
      <div class="flex h-[22px] shrink-0 items-center rounded-[3px] border border-[#acacac] bg-white pl-2 pr-2"><svg class="size-[13px]" viewBox="0 0 14 14"><use href="#search"/></svg><span class="ml-[6px] pt-px" data-w="31">merge</span><svg class="ml-auto h-[10px] w-[13px]" viewBox="0 0 13 10"><path d="M0 5l4-5h9v10H4z" fill="#808080"/><path d="M5 2.500l5 5M10 2.500l-5 5" stroke="#fff" stroke-width="1.300"/></svg></div>
      <div id="tools" class="flex-1 overflow-hidden border border-[#b0b0b0] bg-white pt-px"></div>
    </aside>
  </main>

  <footer data-font='11px "DejaVu Sans Condensed"' class="flex flex-1 items-center border-b border-[#777] pl-1 pt-[2px] font-['DejaVu_Sans_Condensed','DejaVu_Sans',sans-serif] text-[11px] leading-[18px]">
    <div class="flex h-[22px] w-[200px] items-center rounded-[3px] border border-[#acacac] bg-white pl-2 text-[#7d7d7d]"><svg class="size-[13px]" viewBox="0 0 14 14"><use href="#search"/></svg><span class="ml-[6px] whitespace-nowrap font-['Open_Sans','Noto_Sans',sans-serif] text-[12px]" data-font='12px "Open Sans"' data-w="111">Type to locate (Ctrl+K)</span></div>
    <span class="ml-[56px] whitespace-nowrap" data-w="53">Coordinate</span>
    <div class="ml-1 flex h-[22px] w-[97px] items-center rounded-[3px] border border-[#acacac] bg-white pl-[6px]"><span data-w="80">771675,2517454</span></div>
    <svg class="ml-1 size-4" viewBox="0 0 18 18"><path d="M4 2l4-1 3 3 1 4 3 4-1 4-4 1-3-2-4-6-1-4z" fill="#ccc" stroke="#222"/><path d="M4 3l3 6M7 2l3 6M3 8l7-3M5 11l7-3M12 5l5-4M7 14l6-4M9 16l6-3M5 5l7 9" stroke="#222" stroke-width="1.300"/></svg>
    <span class="ml-[13px]" data-w="25">Scale</span>
    <div class="ml-1 flex h-[22px] w-[81px] items-center rounded-[3px] border border-[#acacac] bg-white pl-[3px]"><span data-w="51">1:2250765</span><div class="ml-auto flex h-full w-[20px] items-center justify-center border-l border-[#acacac] bg-[#f5f5f5]"><svg class="h-1 w-2"><path d="M0 0h8L4 4z" fill="#555"/></svg></div></div>
    <svg class="ml-[11px] h-4 w-3" viewBox="0 0 12 16"><path d="M2.500 8V4.500a3.500 3.500 0 0 1 7 0V8" fill="none" stroke="#888" stroke-width="1.500"/><rect y="7" width="12" height="8" rx="1" fill="#555"/></svg>
    <span class="ml-[8px]" data-w="43">Magnifier</span>
    <div class="ml-1 flex h-[22px] w-[82px] items-center rounded-[3px] border border-[#acacac] bg-white pl-[5px]"><span data-w="28">100%</span><div class="ml-auto flex h-full w-[13px] flex-col items-center justify-center gap-1 border-l border-[#acacac] bg-[#f5f5f5]"><svg class="h-1 w-2"><path d="M0 4h8L4 0z" fill="#555"/></svg><svg class="h-1 w-2"><path d="M0 0h8L4 4z" fill="#555"/></svg></div></div>
    <span class="ml-[10px]" data-w="41">Rotation</span>
    <div class="ml-[10px] flex h-[22px] w-[83px] items-center rounded-[3px] border border-[#acacac] bg-white pl-[4px]"><span data-w="25">0.0 °</span><div class="ml-auto flex h-full w-[13px] flex-col items-center justify-center gap-1 border-l border-[#acacac] bg-[#f5f5f5]"><svg class="h-1 w-2"><path d="M0 4h8L4 0z" fill="#555"/></svg><svg class="h-1 w-2"><path d="M0 0h8L4 4z" fill="#555"/></svg></div></div>
    <svg class="ml-[7px] size-[13px] border border-[#aaa] bg-white" viewBox="0 0 13 13"><path d="M3 6l2.500 4.500L10 2" fill="none" stroke="#000" stroke-width="2"/></svg>
    <span class="ml-1" data-w="35">Render</span>
    <svg class="ml-[16px] size-[15px]" viewBox="0 0 15 15"><path d="M5 1h5l5 6-4 6H5L0 7z" fill="#aaa"/><path d="M0 7h15M2 4h11M2 10h11M7.500 0v14M5 1q-4 6 0 12M10 1q4 6 0 12" fill="none" stroke="#666" stroke-width=".8"/></svg>
    <span class="ml-[1px] whitespace-nowrap" data-w="59">EPSG:32618</span>
    <svg class="ml-[23px] h-[15px] w-[16px]" viewBox="0 0 16 15"><path d="M5 0h6q5 1 5 5.500T11 11h-1v4l-3-4H5Q0 10 0 5.500T5 0z" fill="#555"/><g fill="#fff"><circle cx="4.500" cy="5.500" r="1.200"/><circle cx="8" cy="5.500" r="1.200"/><circle cx="11.500" cy="5.500" r="1.200"/></g></svg>
    <svg class="ml-auto mt-3 h-[10px] w-[11px]" viewBox="0 0 11 10"><path d="M1 9h10M4 6h7M7 3h4M10 0h1" stroke="#aaa" stroke-dasharray="1 2"/></svg>
  </footer>
</div>

<script>
const $ = id => document.getElementById(id);
const icon = (n, c) => `<svg class="${c} shrink-0"><use href="#${n}"/></svg>`;

$('menu').innerHTML = [['_Project',37],['_Edit',20],['_View',25],['_Layer',28],['_Settings',42],['_Plugins',39],['Vect_or',33],['_Raster',32],['_Database',48],['_Web',24],['_Mesh',29],['SCP',21],['Pro_cessing',57],['_Help',25]]
  .map(([t, w]) => `<span data-w="${w}">${t.replace(/_(.)/, '<u>$1</u>')}</span>`).join('');

/* name = 33px button, ~ disabled, ! pressed; G grip, S separator, A drop-down arrow, W space, C chevron */
const bars = [
  'G12.5 new open save layout wrench style G16 hand! pan zin zout zfull zsel zlay z11 zlast znext~ nmap n3d nbm bms clock refresh G16 sel~ A~ selv~ A~ desel A selloc G15 ident abacus gear! W18.500 C9',
  'G12.5 dsm gpkgn shp slite chip mesh S7 virt S8 G15 pencils~ pencil~ savee~ pts~ vert~ A~ attr~ trash~ cut~ copy~ paste~ undo~ redo~ G14.5 abcg~ pie~ S9 abpin abcr S7 abping~ W29 C9 G17 globe G17 pyc G15 help G14',
  'G12.5 tri~ arc~ A~ mvp~ A~ b1~ b2~ b3~ b4~ b5~ b4~ b6~ b7~ b8~ b9~ b10~ b11~ b12~ b12~ b14~ b15~ b16~ A~'
];
$('bars').innerHTML = bars.map(b => '<div class="flex h-[39px] items-center border-b border-[#b4b4b4] bg-linear-to-b from-[#fafafa] to-[#ececec]">' + b.split(' ').map(k => {
  const m = k.match(/^([GSWC])([\d.]+)$/);
  if (m) {
    const inner = { G: '<i class="h-[17px] w-[5px] bg-[radial-gradient(circle,#b5b5b5_0.7px,transparent_0.9px)] bg-[length:2.5px_3px]"></i>', S: '<i class="mr-[2px] h-[18px] w-px bg-[#c4c4c4]"></i>', W: '', C: '<b class="pb-[3px] text-[14px] leading-4 font-normal">»</b>' }[m[1]];
    return `<div class="flex shrink-0 items-center justify-end ${m[1] === 'G' ? 'pr-[3px]' : ''}" style="width:${m[2]}px">${inner}</div>`;
  }
  const off = k.endsWith('~'), on = k.endsWith('!'), n = k.replace(/[~!]/, '');
  if (n === 'A') return `<div class="flex w-3 shrink-0 justify-center pr-[2px]"><svg class="h-1 w-2 ${off ? 'opacity-50' : ''}"><path d="M0 0h8L4 4z" fill="#333"/></svg></div>`;
  return `<div class="flex h-[31px] w-[33px] shrink-0 items-center justify-center ${on ? 'rounded-[3px] border border-[#a8a8a8] bg-[#dcdcdc]' : ''}">${icon(n, off ? 'size-6 opacity-40 saturate-[.25]' : 'size-6')}</div>`;
}).join('') + '</div>').join('');

const arrow = s => s === '>' ? '<svg class="h-2 w-2"><path d="M2 0v8l4-4z" fill="#555"/></svg>' : s === 'v' ? '<svg class="h-1 w-2"><path d="M0 0h8L4 4z" fill="#555"/></svg>' : '<i class="w-2"></i>';

$('browser').innerHTML = [['','star','Favorites',47],['>','bm16','Spatial Bookmarks',97],['>','home','Home',33],['>','fold','C:\\ (SYSTEM)',69],['>','fold','E:\\ (Volume)',65],['','gpkg','GeoPackage',65],['','feather','SpatiaLite',51],['','eleph','PostGIS',40],['','hana','SAP HANA',57]]
  .map(([a, i, t, w]) => `<div class="flex h-[18px] items-center pl-1">${arrow(a)}${icon(i, i === 'fold' || i === 'home' || i === 'bm16' ? 'ml-2 mr-px size-[14px]' : 'ml-[7px] size-4')}<span class="ml-[6px] whitespace-nowrap" data-w="${w}">${t}</span></div>`).join('');

/* depth, arrow, icon, label, width */
$('tools').innerHTML = [
  [0,'>','clock16','Recently used',73],[0,'v','qlogo','Cartography',66],[1,'','gear','Combine style databases',131],
  [0,'v','qlogo','Database',48],[1,'','gear','Package layers',77],[0,'v','qlogo','Vector general',75],[1,'','mvl','Merge vector layers',103],
  [0,'v','qlogo','Vector geometry',87],[1,'','gear','Merge lines',61],[0,'v','gdal','GDAL',30],[2,'v','','Raster miscellaneous',110],
  [3,'','gm','Merge',34,1],[0,'v','las','LAStools',46],[2,'v','','file - conversion',85],[3,'','las','lasmerge',48],
  [2,'v','','folder - conversion',100],[3,'','las','lasmergePro',66],[2,'v','','pipeline - strips',81],
  [3,'','las','flightlinesToMergedCHM_FirstReturn',195],[3,'','las','flightlinesToMergedCHM_HighestReturn',214],
  [3,'','las','flightlinesToMergedCHM_PitFree',175],[3,'','las','flightlinesToMergedCHM_SpikeFree',189],
  [0,'v','saga','SAGA',30,2],[2,'v','','Features - Tools',82,2],[3,'','saga','Merge Layers',70,2],[3,'','saga','Merge Tables',69,2]
].map(([d, a, i, t, w, f]) => {
  const pad = ['h-[18px] pl-[6px]', 'h-[18px] pl-[26px]', 'h-[15px] pl-[26px] pb-[2px]', 'h-[18px] pl-[46px]'][d];
  return `<div class="flex items-center ${pad} ${f === 1 ? 'bg-[#efefef]' : ''} ${f === 2 ? 'text-[#999]' : ''}">${arrow(a)}${i ? icon(i, i === 'las' ? 'ml-[10px] mr-px size-[14px]' : 'ml-[9px] size-4') : ''}<span class="${i ? 'ml-[6px]' : 'ml-[9px]'} whitespace-nowrap" data-w="${w}">${t}</span></div>`;
}).join('');

const ruler = document.createElement('canvas').getContext('2d');
document.querySelectorAll('[data-w]').forEach(e => {
  e.classList.add('whitespace-nowrap', 'shrink-0');
  const host = e.closest('[data-font]'), t = e.textContent;
  ruler.font = host ? host.dataset.font : '12px "Open Sans"';
  e.style.letterSpacing = ((+e.dataset.w - ruler.measureText(t).width) / t.length).toFixed(3) + 'px';
});

/* Satellite scene */
const g = $('map').getContext('2d', { willReadFrequently: true });
let seed = 20220614;
const R = () => { seed = seed + 0x6D2B79F5 | 0; let t = Math.imul(seed ^ seed >>> 15, 1 | seed); t = t + Math.imul(t ^ t >>> 7, 61 | t) ^ t; return ((t ^ t >>> 14) >>> 0) / 4294967296; };
const hash = (x, y) => { let h = Math.imul(x, 374761393) + Math.imul(y, 668265263) | 0; h = Math.imul(h ^ h >>> 13, 1274126177); return ((h ^ h >>> 16) >>> 0) / 4294967296; };
const noise = (x, y) => { const i = Math.floor(x), j = Math.floor(y), u = x - i, v = y - j, s = u * u * (3 - 2 * u), q = v * v * (3 - 2 * v); return (hash(i, j) * (1 - s) + hash(i + 1, j) * s) * (1 - q) + (hash(i, j + 1) * (1 - s) + hash(i + 1, j + 1) * s) * q; };
const poly = (p, c) => { g.beginPath(); p.forEach((q, i) => i ? g.lineTo(q[0], q[1]) : g.moveTo(q[0], q[1])); g.closePath(); if (c) { g.fillStyle = c; g.fill(); } };
g.fillStyle = '#000'; g.fillRect(0, 0, 383, 391);
poly([[72,1],[378,65],[309,389],[4,324]]); g.clip();
for (let y = 0; y < 391; y++) for (let x = 0; x < 383; x++) {
  const t = Math.min(1, Math.max(0, (x + y * .1 - 215) / 130)), t2 = t * t * (3 - 2 * t);
  const u = x - y * .2, s = noise(u / 4.500, y / 34), k = hash(x, y) * 4;
  const e = t2 * Math.max(0, s - .55) * 2.2, dk = t2 * (.45 + noise(u / 8 + 40, y / 45) * .9);
  g.fillStyle = `rgb(${58 - dk * 30 + k - t * 3 + e * 10 | 0},${57 - dk * 27 + k + e * 28 | 0},${62 - dk * 6 + k + e * 30 | 0})`;
  g.fillRect(x, y, 1, 1);
}
const reef = 'rgba(65,85,112,.5)';
poly([[99,9],[86,22],[80,31],[95,41],[104,56],[106,70],[98,92],[92,111],[109,97],[125,81],[149,74],[162,57],[172,37],[169,24],[150,18],[135,16]], reef);
poly([[202,311],[209,297],[220,296],[235,289],[243,290],[252,277],[259,291],[279,287],[292,270],[305,257],[320,257],[322,272],[315,292],[302,317],[292,327],[259,331],[232,330],[209,336],[204,324]], 'rgba(80,96,130,.5)');
poly([[312,222],[323,214],[337,222],[335,230],[315,233]], 'rgba(90,100,120,.5)');
poly([[295,49],[377,66],[372,74],[355,72],[325,66],[294,64]], 'rgba(78,95,125,.55)');
poly([[276,46],[296,50],[293,66],[276,68]], 'rgba(18,20,45,.7)');
const px = g.getImageData(0, 0, 383, 391).data;
for (let i = 0; i < 24000; i++) {
  const x = R() * 383 | 0, y = R() * 391 | 0, o = (y * 383 + x) * 4;
  if (px[o + 2] > px[o] + 14 && px[o] > 52) { g.fillStyle = R() < .5 ? 'rgba(120,150,180,.35)' : 'rgba(30,40,85,.45)'; g.fillRect(x, y, 1, 1); }
}
g.strokeStyle = 'rgba(95,135,160,.45)'; g.lineWidth = 1.5;
const stroke = p => { g.beginPath(); p.forEach((q, i) => i ? g.lineTo(q[0], q[1]) : g.moveTo(q[0], q[1])); g.stroke(); };
stroke([[98,12],[86,24],[82,30],[94,37]]); stroke([[146,75],[155,68],[161,56]]); stroke([[171,42],[172,32],[166,22]]); stroke([[93,110],[101,100],[104,88]]); stroke([[208,335],[218,330],[240,332],[275,331]]); stroke([[356,73],[375,70]]);
poly([[208,312],[225,311],[240,309],[245,312],[236,319],[225,323],[209,320]], 'rgba(100,98,175,.6)');
poly([[232,317],[244,312],[256,306],[250,314],[238,320],[226,323]], 'rgba(55,55,165,.65)');
for (let i = 0; i < 120; i++) { g.fillStyle = 'rgba(75,85,62,.35)'; g.fillRect(58 + (R() + R() - 1) * 10 | 0, 117 + (R() + R() - 1) * 8 | 0, 2, 1); }

const speck = (x, y, w) => { const r = R(), v = 110 + R() * 130 | 0; g.fillStyle = r < w ? `rgb(${v},${v},${v})` : r < w + .25 ? '#55576e' : '#191a30'; g.fillRect(x | 0, y | 0, 1, R() < .35 ? 2 : 1); };
const field = (cx, cy, rx, ry, n, w = .3) => { for (let i = 0; i < n; i++) { const x = cx + (R() + R() + R() - 1.5) * rx * 1.1, y = cy + (R() + R() + R() - 1.5) * ry * 1.1; if (noise(x / 4 + 9, y / 4) > .4) speck(x, y, w); } };
const band = (x1, y1, x2, y2, h, n, w = .3) => { for (let i = 0; i < n; i++) { const t = R(); speck(x1 + (x2 - x1) * t, y1 + (y2 - y1) * t + (R() + R() - 1) * h, w); } };
const cloud = (cx, cy, rx, ry, s = 1.3) => {
  field(cx, cy + 1, rx * 1.3, ry * 1.3, rx * ry * .7, .4);
  for (let y = cy - ry * 1.3; y <= cy + ry * 1.3; y++) for (let x = cx - rx * 1.3; x <= cx + rx * 1.3; x++) {
    const n = noise(x / 5, y / 5) * .5 + noise(x / 2 + 50, y / 2) * .5;
    const e = ((x - cx) / rx) ** 2 + ((y - cy) / ry) ** 2, d = e + (n - .5) * 2.6, lim = .25 + s * .5;
    if (d < lim && e < 1.7) {
      const b = (lim - d) * 2 + hash(x | 0, y | 0) * .6, v = Math.min(255, 125 + b * 115) | 0;
      if (b < .35) continue;
      g.fillStyle = `rgb(${v},${v},${v})`; g.fillRect(x | 0, y | 0, 1, 1);
    }
  }
};
[[295,110,70,60,420,.1],[320,170,48,60,330,.1],[330,100,38,45,320,.25],[285,154,20,8,190,.4],[258,180,16,7,170,.5],[300,190,50,14,190,.3],[230,100,38,18,300,.15],[180,90,5,16,150,.4],[200,102,6,6,90,.4],[100,115,6,8,110,.35],[90,152,7,9,150,.35],[99,166,4,6,60,.3],[140,85,28,9,110,.25],[165,62,22,10,120,.25],[140,200,10,12,40,.2],[87,200,6,10,80,.3],[85,225,12,12,90,.3],[100,256,8,10,40,.2],[60,268,14,12,120,.15],[42,264,10,8,240,.6],[45,290,12,20,450,.55],[170,202,16,5,100,.3],[215,178,25,10,150,.15],[320,320,16,16,260,.3],[225,352,22,3,80,.3],[300,367,18,6,120,.3],[307,264,10,7,180,.6],[300,290,24,24,420,.45],[255,322,45,10,260,.5],[255,348,55,12,110,.1],[320,250,14,30,180,.15],[270,50,32,6,130,.15],[135,30,38,25,320,.35],[52,140,3,14,50,.4],[45,180,3,24,70,.3],[68,50,6,40,130,.3],[150,150,120,70,40,.25],[345,60,25,6,130,.5],[312,222,18,6,170,.6],[330,240,10,40,120,.15],[152,335,50,12,50,.1],[70,100,15,10,40,.2]].forEach(a => field(...a));
[[240,44,275,49,5,60,.25],[266,73,330,64,4,170,.7],[330,80,350,64,6,60,.5],[300,104,360,100,8,110,.3],[48,128,72,130,1.5,30,.5],[160,229,212,231,1,30,.4],[212,237,305,231,5,150,.15],[195,176,275,188,5,60,.2],[150,22,378,68,4,60,.15],[8,324,110,322,4,170,.5],[100,318,200,314,7,200,.25],[208,322,280,322,2,90,.8],[249,374,285,350,3,110,.7],[212,301,262,291,4,90,.5],[279,292,302,278,5,70,.4],[349,130,375,110,6,60,.3],[160,203,190,200,3,50,.5]].forEach(a => band(...a));
[[109,22,13,20,1.5],[117,61,13,20,1.3],[135,27,11,12,1],[122,44,14,8,1],[143,45,14,4,.4],[85,49,14,4,.8],[75,57,8,7,1],[64,69,8,7,.9],[70,82,7,13,1],[57,94,5,6,1],[114,76,7,10,.8],[84,6,12,3,.7],[100,11,10,4,.8],[174,54,6,4,.5],[205,72,5,7,1.1],[232,74,15,13,1.3],[249,75,17,7,1.3],[218,66,13,5,.6],[264,74,8,4,.9],[282,71,14,3,.4],[305,68,14,3,.4],[334,73,9,7,.9],[45,187,2,4,.9],[34,214,4,10,.9],[35,232,4,11,.9],[37,281,6,8,.4],[42,268,5,6,.2],[49,293,9,15,.4],[20,325,14,2,.6],[48,324,14,3,.7],[69,326,7,6,1.1],[74,332,4,8,.6],[114,329,9,9,1],[120,340,6,6,.4],[109,314,11,4,.8],[135,311,12,5,1.1],[165,310,15,5,1.2],[186,309,13,7,1.3],[192,329,8,6,.8],[216,303,16,4,.9],[235,300,16,4,.8],[252,294,10,3,.7],[258,323,6,3,.8],[218,235,9,4,.8],[237,234,14,4,.6],[256,231,10,3,.6],[275,230,12,3,.5],[295,229,14,4,.7],[87,240,3,3,.8],[166,328,2,6,.4]].forEach(a => cloud(...a));
</script>
</body>
</html>
